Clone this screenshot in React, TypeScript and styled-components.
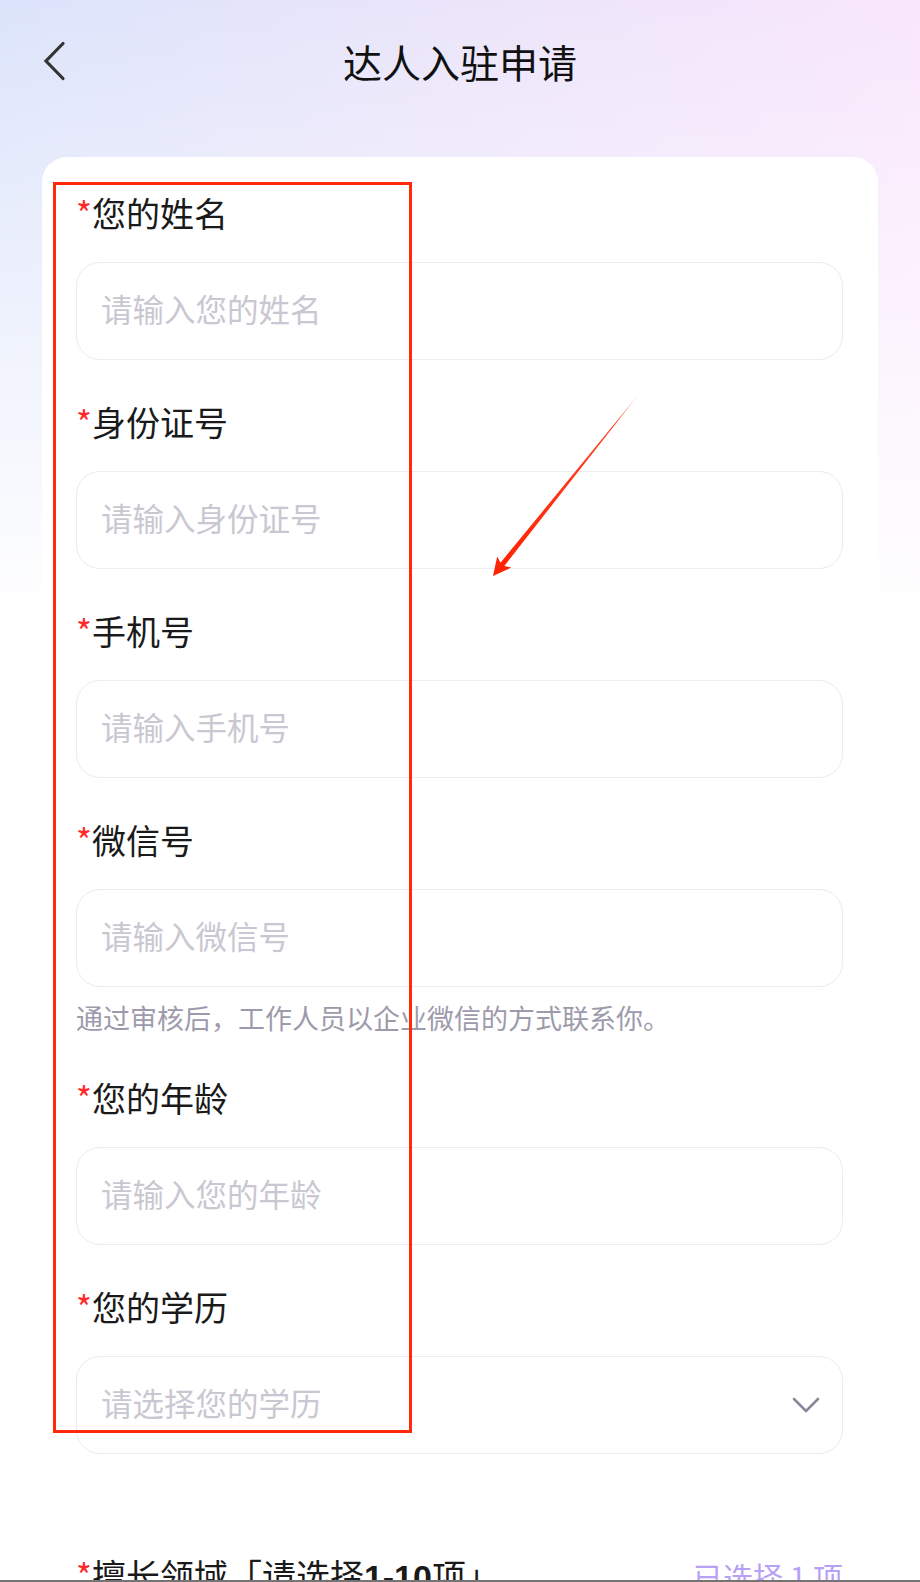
import React from 'react';
import styled, { createGlobalStyle } from 'styled-components';

const GlobalStyle = createGlobalStyle`
  html, body {
    margin: 0;
    padding: 0;
    background: #ffffff;
  }
  body {
    font-family: 'Noto Sans CJK SC', 'Noto Sans', 'Liberation Sans', sans-serif;
  }
  * {
    box-sizing: border-box;
  }
`;

const Page = styled.div`
  position: relative;
  width: 920px;
  height: 1582px;
  overflow: hidden;
  background:
    linear-gradient(180deg, rgba(255, 255, 255, 0) 0px, rgba(255, 255, 255, 0.55) 330px, #ffffff 620px),
    linear-gradient(90deg, #dce4fb 0%, #ebe5fa 50%, #f9e6fc 100%);
`;

const Header = styled.header`
  height: 122px;
  display: grid;
  grid-template-columns: 1fr auto 1fr;
  align-items: center;
`;

const BackButton = styled.button`
  justify-self: start;
  margin-left: 43px;
  padding: 0;
  border: none;
  background: none;
  display: flex;
  cursor: pointer;
`;

const Title = styled.h1`
  margin: 0;
  font-size: 39px;
  font-weight: 400;
  color: #111111;
`;

const Card = styled.main`
  margin: 35px 42px 0;
  padding: 32px 35px 0 34px;
  background: #ffffff;
  border-radius: 25px;
`;

const Field = styled.section`
  padding-bottom: 38px;
`;

const Label = styled.div`
  font-size: 34px;
  line-height: 48px;
  color: #1a1a1a;
`;

const Star = styled.span`
  color: #ff2b2b;
`;

const Box = styled.label`
  margin-top: 25px;
  height: 98px;
  display: flex;
  align-items: center;
  padding: 0 22px 0 24px;
  border: 1px solid #ebebf0;
  border-radius: 24px;
`;

const Input = styled.input`
  flex: 1;
  min-width: 0;
  border: none;
  outline: none;
  background: transparent;
  padding: 0 0 6px;
  font-family: inherit;
  font-size: 31.5px;
  color: #1a1a1a;

  &::placeholder {
    color: #c9c8d2;
  }
`;

const SelectText = styled.span`
  flex: 1;
  padding-bottom: 6px;
  font-size: 31.5px;
  color: #c9c8d2;
`;

const Hint = styled.p`
  margin: 13px 0 0;
  font-size: 27px;
  line-height: 36px;
  color: #9d9bab;
`;

const SectionHead = styled.div`
  margin-top: 59px;
  display: flex;
  justify-content: space-between;
  align-items: baseline;
`;

const Strong = styled.b`
  font-family: 'Liberation Sans', 'Noto Sans', sans-serif;
  font-weight: 700;
`;

const Count = styled.span`
  font-size: 30px;
  color: #b7a1f7;
`;

const Highlight = styled.div`
  position: absolute;
  left: 53px;
  top: 182px;
  width: 359px;
  height: 1251px;
  border: 3px solid #ff2a0c;
  pointer-events: none;
`;

const Overlay = styled.svg`
  position: absolute;
  left: 0;
  top: 0;
  pointer-events: none;
`;

const BottomEdge = styled.div`
  position: absolute;
  left: 0;
  right: 0;
  bottom: 0;
  height: 2px;
  background: #747474;
`;

type TextField = { label: string; placeholder: string; hint?: string };

const fields: TextField[] = [
  { label: '您的姓名', placeholder: '请输入您的姓名' },
  { label: '身份证号', placeholder: '请输入身份证号' },
  { label: '手机号', placeholder: '请输入手机号' },
  { label: '微信号', placeholder: '请输入微信号', hint: '通过审核后，工作人员以企业微信的方式联系你。' },
  { label: '您的年龄', placeholder: '请输入您的年龄' },
];

const ChevronLeft = () => (
  <svg width="24" height="40" viewBox="0 0 24 40">
    <polyline points="20,2.5 3,20 20,37.5" fill="none" stroke="#333333" strokeWidth="3.2" strokeLinecap="round" />
  </svg>
);

const ChevronDown = () => (
  <svg width="28" height="16" viewBox="0 0 28 16">
    <polyline points="2,2 14,14 26,2" fill="none" stroke="#8b889b" strokeWidth="2.6" strokeLinecap="round" strokeLinejoin="round" />
  </svg>
);

const App: React.FC = () => {
  return (
    <>
      <GlobalStyle />
      <Page>
        <Header>
          <BackButton aria-label="返回">
            <ChevronLeft />
          </BackButton>
          <Title>达人入驻申请</Title>
          <span />
        </Header>

        <Card>
          {fields.map((f) => (
            <Field key={f.label}>
              <Label>
                <Star>*</Star>
                {f.label}
              </Label>
              <Box>
                <Input placeholder={f.placeholder} readOnly />
              </Box>
              {f.hint && <Hint>{f.hint}</Hint>}
            </Field>
          ))}

          <Field>
            <Label>
              <Star>*</Star>
              您的学历
            </Label>
            <Box>
              <SelectText>请选择您的学历</SelectText>
              <ChevronDown />
            </Box>
          </Field>

          <SectionHead>
            <Label>
              <Star>*</Star>
              擅长领域「请选择<Strong>1-10</Strong>项」
            </Label>
            <Count>已选择 1 项</Count>
          </SectionHead>
        </Card>

        <Highlight />
        <Overlay width="920" height="1582" viewBox="0 0 920 1582">
          <defs>
            <linearGradient id="arrowFade" gradientUnits="userSpaceOnUse" x1="643" y1="389" x2="493" y2="576">
              <stop offset="0" stopColor="#ff2200" stopOpacity="0" />
              <stop offset="0.18" stopColor="#ff2200" stopOpacity="0.85" />
              <stop offset="1" stopColor="#ff2200" stopOpacity="1" />
            </linearGradient>
          </defs>
          <polygon
            points="643,389 504.3,565.9 511.3,567.6 493,576 497.2,556.4 500.5,562.7"
            fill="url(#arrowFade)"
          />
        </Overlay>
        <BottomEdge />
      </Page>
    </>
  );
};

export default App;
